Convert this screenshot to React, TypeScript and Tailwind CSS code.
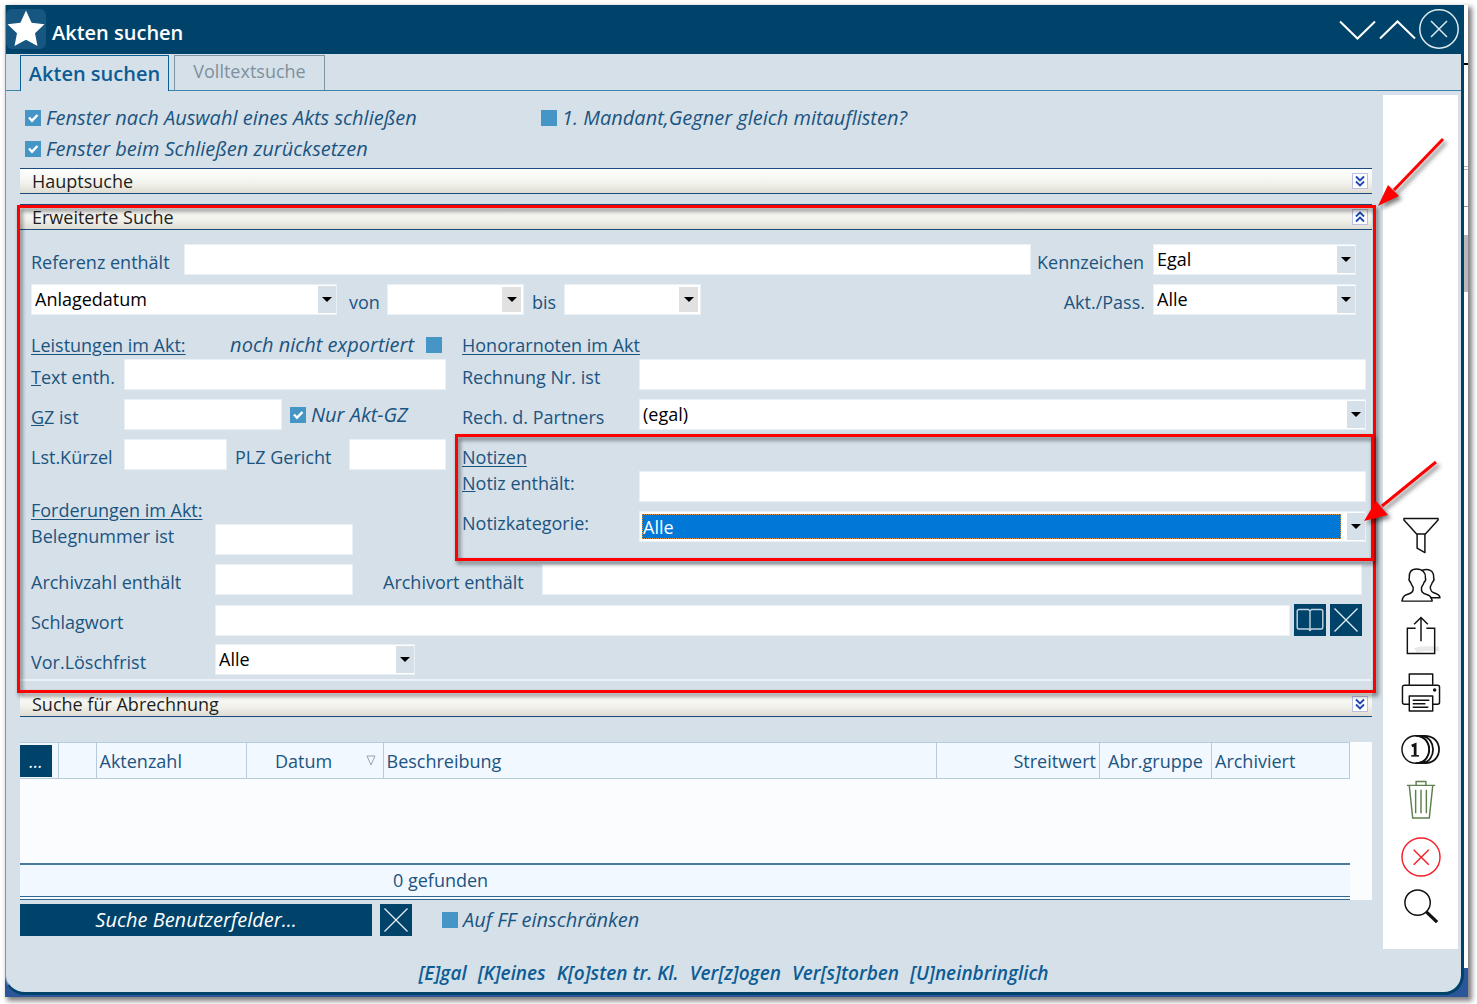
import { useId, type ReactNode } from "react";

/* ---------- form controls ---------- */

function Caret() {
  return (
    <svg viewBox="0 0 10 5" className="h-[5px] w-2.5" aria-hidden>
      <path d="M0 0h10L5 5z" fill="#000" />
    </svg>
  );
}

function TextField({ id, label, className = "" }: { id?: string; label?: string; className?: string }) {
  return (
    <input
      id={id}
      type="text"
      aria-label={label}
      className={`h-[31px] min-w-0 border border-[#e9f0f6] bg-white px-1 text-black outline-none ${className}`}
    />
  );
}

interface SelectFieldProps {
  id: string;
  options: string[];
  className?: string;
  focused?: boolean;
}

function SelectField({ id, options, className = "", focused = false }: SelectFieldProps) {
  return (
    <div className={`flex h-[31px] min-w-0 items-center border border-[#e9f0f6] bg-white ${className}`}>
      <select
        id={id}
        className={
          focused
            ? "mr-1.5 ml-0.5 h-[25px] min-w-0 flex-1 appearance-none border border-dotted border-[#e08a3c] bg-[#0078d7] text-white outline-none"
            : "h-full min-w-0 flex-1 appearance-none bg-white pb-0.5 pl-[3px] text-black outline-none"
        }
      >
        {options.map((o) => (
          <option key={o}>{o}</option>
        ))}
      </select>
      <span className="pointer-events-none flex h-[27px] w-[18px] items-center justify-center bg-[#d5e0e9]">
        <Caret />
      </span>
    </div>
  );
}

function DateField({ id, className = "" }: { id: string; className?: string }) {
  return (
    <div className={`flex h-[31px] items-center border border-[#e9f0f6] bg-white ${className}`}>
      <input id={id} type="text" className="h-full min-w-0 flex-1 px-1 text-black outline-none" />
      <button
        type="button"
        aria-label="Kalender"
        className="mr-0.5 flex h-[25px] w-[19px] items-center justify-center bg-[#e1e1e1]"
      >
        <Caret />
      </button>
    </div>
  );
}

interface CheckFieldProps {
  label: string;
  checked?: boolean;
  boxAfter?: boolean;
  className?: string;
}

function CheckField({ label, checked = false, boxAfter = false, className = "" }: CheckFieldProps) {
  return (
    <label
      className={`flex items-center text-[20px] leading-6 whitespace-nowrap italic ${boxAfter ? "flex-row-reverse gap-3" : "gap-[5px]"} ${className}`}
    >
      <span className="relative size-4 shrink-0">
        <input type="checkbox" defaultChecked={checked} className="peer block size-4 appearance-none bg-[#4596c6]" />
        <svg
          viewBox="0 0 16 16"
          className="pointer-events-none absolute inset-0 hidden size-4 peer-checked:block"
          fill="none"
          stroke="#fff"
          strokeWidth="2.4"
          aria-hidden
        >
          <path d="M4 7.5l3 3.2L12.5 5" />
        </svg>
      </span>
      {label}
    </label>
  );
}

interface LabelProps {
  htmlFor: string;
  flush?: boolean;
  className?: string;
  children: ReactNode;
}

function Label({ htmlFor, flush = false, className = "", children }: LabelProps) {
  return (
    <label htmlFor={htmlFor} className={`shrink-0 ${flush ? "self-start" : "pt-1"} ${className}`}>
      {children}
    </label>
  );
}

function Heading({ children, className = "" }: { children: ReactNode; className?: string }) {
  return <h3 className={`flex h-7 items-center underline underline-offset-2 ${className}`}>{children}</h3>;
}

function SectionBar({ title, open = false }: { title: string; open?: boolean }) {
  return (
    <div className="flex h-[26px] items-center justify-between border-y border-y-[#1a4b7c] bg-linear-to-b from-white via-[#f2f2ec] via-60% to-[#dedcd2] pr-1 pl-3 text-[#1e1e1e]">
      <h2>{title}</h2>
      <button
        type="button"
        aria-expanded={open}
        aria-label={title}
        className="flex size-4 items-center justify-center border border-[#b9c0e4] bg-white"
      >
        <svg viewBox="0 0 10 12" className="h-3 w-2.5" fill="none" stroke="#1c46b4" strokeWidth="1.8" aria-hidden>
          {open ? <path d="M1 5.5l4-4 4 4M1 10.5l4-4 4 4" /> : <path d="M1 1.5l4 4 4-4M1 6.5l4 4 4-4" />}
        </svg>
      </button>
    </div>
  );
}

function CrossButton({ label }: { label: string }) {
  return (
    <button type="button" aria-label={label} className="size-8 shrink-0 bg-[#00436a]">
      <svg viewBox="0 0 32 32" className="size-8" stroke="#e6eef4" strokeWidth="1.3" aria-hidden>
        <path d="M4.5 4.5l23 23M27.5 4.5l-23 23" />
      </svg>
    </button>
  );
}

/* ---------- red markers ---------- */

function MarkFrame({ className }: { className: string }) {
  return (
    <div
      aria-hidden
      className={`pointer-events-none absolute border-3 border-[#f00] drop-shadow-[2px_3px_2px_rgba(0,0,0,0.55)] ${className}`}
    />
  );
}

/* ---------- tool bar icons ---------- */

const tools: { name: string; gap: string; icon: ReactNode }[] = [
  {
    name: "Filter",
    gap: "mt-0",
    icon: (
      <g strokeLinejoin="round">
        <path d="M3 2.5h35v1.5L25 18.500h-9L3 4z" />
        <path d="M16.500 18.500v14.500l8 4.500V18.500" />
      </g>
    ),
  },
  {
    name: "Personen",
    gap: "mt-2.5",
    icon: (
      <g strokeLinejoin="round">
        <path d="M16 3c-6 0-8 4-7.500 9-1 2 .5 4 1.500 5 .5 2 2 3.500 2.500 5 .5 5-2 6-7 7.500-3 1-4 3-4.500 6.500h31c-.5-3.500-2-5.500-5-6.500-5-1.500-6.500-3-6-7.500.5-1.500 2-3 2.500-5 1-1 2.500-3 1.500-5 .5-5-3-9-9-9z" />
        <path d="M21.500 4.500c6-2.500 12.500 0 12 7.500 1 2-.5 4-1.500 5-.5 2-1.500 3-2 4.500 0 4.500 2 5.500 5 6.500 3 1 4.500 2 5 4.500h-10" />
      </g>
    ),
  },
  {
    name: "Exportieren",
    gap: "mt-2.5",
    icon: (
      <>
        <path d="M15 35.500c6-4 16-1 24-2" stroke="#e9e9e9" strokeWidth="5" />
        <path d="M15 12.500H6.500v26h28v-26H26M20.500 26V2M13.500 8.500l7-7 7 7" />
      </>
    ),
  },
  {
    name: "Drucken",
    gap: "mt-[17px]",
    icon: (
      <g strokeLinejoin="round">
        <path d="M8.500 12V1h24v11" />
        <path d="M8.500 32H3.500a2 2 0 0 1-2-2V14.500a2 2 0 0 1 2-2h34a2 2 0 0 1 2 2V30a2 2 0 0 1-2 2h-5" />
        <path d="M8.500 23.500h24V39h-24zM12 28h17M12 31.500h13M12 35h16" />
        <circle cx="34.500" cy="17.500" r="1" fill="#111" />
      </g>
    ),
  },
  {
    name: "Honorar",
    gap: "mt-[17px]",
    icon: (
      <>
        <circle cx="15" cy="20" r="14" />
        <path d="M11 16.500l3.500-1.500v11" strokeWidth="2.800" />
        <path d="M10.500 26.500h8" strokeWidth="1.600" />
        <path d="M18 6.300c14.500 2 14.500 25.400 0 27.400M22 6.300c14.500 2 14.500 25.400 0 27.400M25.500 6c18 1 18 27 0 28M15 6h11M15 34h11" strokeWidth="1.800" />
      </>
    ),
  },
  {
    name: "Papierkorb",
    gap: "mt-2.5",
    icon: (
      <g stroke="#5f8050">
        <path d="M6 5.500h29M15.500 5V1.500h10V5M8.500 6L12 39h17l3.500-33M15 10v24M20.500 10v24M26 10v24" />
      </g>
    ),
  },
  {
    name: "Abbrechen",
    gap: "mt-[17px]",
    icon: (
      <g stroke="#f5202a">
        <circle cx="20.500" cy="20.500" r="19.500" />
        <path d="M13 13l15.500 15.500M28.500 13L13 28.500" />
      </g>
    ),
  },
  {
    name: "Suchen",
    gap: "mt-2.5",
    icon: (
      <>
        <circle cx="17" cy="16" r="13" />
        <path d="M26 25.500l11 10.500" strokeWidth="3.400" />
      </>
    ),
  },
];

function ToolBar() {
  return (
    <aside className="flex w-[75px] shrink-0 flex-col items-center justify-end bg-white pb-[22px]">
      {tools.map((t) => (
        <button key={t.name} type="button" aria-label={t.name} className={`size-10 ${t.gap}`}>
          <svg viewBox="0 0 41 41" className="size-10" fill="none" stroke="#111" strokeWidth="1.5" aria-hidden>
            {t.icon}
          </svg>
        </button>
      ))}
    </aside>
  );
}

/* ---------- window parts ---------- */

function TitleBar() {
  return (
    <header className="flex h-12 items-center bg-[#00436a] pr-0.5 text-white">
      <span className="flex size-10 items-center justify-center rounded-md bg-[#165680]">
        <svg viewBox="0 0 40 40" className="size-10" fill="#fff" aria-hidden>
          <path d="M20 1.500l5.600 12.200 12.900 1.500-9.500 9L31.500 37 20 30.800 8.500 37 11 24.200l-9.500-9 12.900-1.500z" />
        </svg>
      </span>
      <h1 className="flex-1 pt-2 pl-1.5 text-[20px] font-semibold">Akten suchen</h1>
      <div className="flex gap-[3px]">
        <button type="button" aria-label="Verkleinern">
          <svg viewBox="0 0 37 40" className="h-10 w-[37px]" fill="none" stroke="#fff" strokeWidth="2" aria-hidden>
            <path d="M1 12.500l17.500 17L36 12.500" />
          </svg>
        </button>
        <button type="button" aria-label="Vergrößern">
          <svg viewBox="0 0 37 40" className="h-10 w-[37px]" fill="none" stroke="#fff" strokeWidth="2" aria-hidden>
            <path d="M1 29.500l17.500-17L36 29.500" />
          </svg>
        </button>
        <button type="button" aria-label="Schließen">
          <svg viewBox="0 0 40 40" className="size-10" fill="none" stroke="#dfe9f0" strokeWidth="1.5" aria-hidden>
            <circle cx="20" cy="20" r="19.200" />
            <path d="M12 12l16 16M28 12L12 28" />
          </svg>
        </button>
      </div>
    </header>
  );
}

function Tabs() {
  return (
    <div className="border-t border-[#00436a]">
      <div role="tablist" className="flex h-[37px] items-stretch border-b border-[#3f82ab] pt-px pl-3.5">
        <button
          type="button"
          role="tab"
          aria-selected
          className="-mb-px w-[149px] border border-b-0 border-[#0a5f97] bg-[#d5e0e9] text-[20px] font-semibold text-[#0d5c93]"
        >
          Akten suchen
        </button>
        <button
          type="button"
          role="tab"
          aria-selected={false}
          className="ml-[5px] w-[151px] border border-b-0 border-[#7f95a3] pb-1 text-[#7f909c]"
        >
          Volltextsuche
        </button>
      </div>
    </div>
  );
}

function ExtendedSearch() {
  const id = useId();
  return (
    <section className="relative mt-2.5">
      <SectionBar title="Erweiterte Suche" open />
      <div className="border-r border-b-2 border-[#ecf2f7] pt-3.5 pr-[5px] pb-1 pl-[11px]">
        <div className="mr-2.5 flex items-center">
          <Label htmlFor={`${id}ref`} className="w-[153px]">Referenz enthält</Label>
          <TextField id={`${id}ref`} className="flex-1" />
          <Label htmlFor={`${id}kz`} className="w-[122px] pl-1.5">Kennzeichen</Label>
          <SelectField id={`${id}kz`} options={["Egal"]} className="w-[203px]" />
        </div>

        <div className="mt-[9px] mr-2.5 flex items-center">
          <SelectField id={`${id}datum`} options={["Anlagedatum"]} className="w-[306px]" />
          <Label htmlFor={`${id}von`} className="w-[50px] pl-3">von</Label>
          <DateField id={`${id}von`} className="w-[137px]" />
          <Label htmlFor={`${id}bis`} className="w-10 pl-2">bis</Label>
          <DateField id={`${id}bis`} className="w-[137px]" />
          <Label htmlFor={`${id}pass`} className="ml-auto pr-2">Akt./Pass.</Label>
          <SelectField id={`${id}pass`} options={["Alle"]} className="w-[203px]" />
        </div>

        <div className="mt-4 flex gap-4">
          <div className="w-[415px] shrink-0">
            <div className="flex items-center justify-between">
              <Heading>Leistungen im Akt:</Heading>
              <CheckField label="noch nicht exportiert" boxAfter className="pr-1" />
            </div>
            <div className="flex items-center">
              <Label htmlFor={`${id}text`} className="w-[93px]"><u>T</u>ext enth.</Label>
              <TextField id={`${id}text`} className="flex-1" />
            </div>
            <div className="mt-[9px] flex items-center">
              <Label htmlFor={`${id}gz`} className="w-[93px]"><u>G</u>Z ist</Label>
              <TextField id={`${id}gz`} className="w-[158px]" />
              <CheckField label="Nur Akt-GZ" checked className="pl-2" />
            </div>
            <div className="mt-[9px] flex items-center">
              <Label htmlFor={`${id}lst`} className="w-[93px]">Lst.Kürzel</Label>
              <TextField id={`${id}lst`} className="w-[103px]" />
              <Label htmlFor={`${id}plz`} className="w-[122px] pl-2">PLZ Gericht</Label>
              <TextField id={`${id}plz`} className="flex-1" />
            </div>
            <Heading className="mt-[26px]">Forderungen im Akt:</Heading>
            <div className="flex">
              <Label htmlFor={`${id}beleg`} flush className="w-[184px]">Belegnummer ist</Label>
              <TextField id={`${id}beleg`} className="w-[138px]" />
            </div>
          </div>

          <div className="min-w-0 flex-1">
            <Heading>Honorarnoten im Akt</Heading>
            <div className="flex items-center">
              <Label htmlFor={`${id}rnr`} className="w-[177px]">Rechnung Nr. ist</Label>
              <TextField id={`${id}rnr`} className="flex-1" />
            </div>
            <div className="mt-[9px] flex items-center">
              <Label htmlFor={`${id}partner`} className="w-[177px]">Rech. d. Partners</Label>
              <SelectField id={`${id}partner`} options={["(egal)"]} className="flex-1" />
            </div>
            <div className="relative mt-[13px]">
              <MarkFrame className="-top-[9px] -right-2 -bottom-[19px] -left-[7px] z-10" />
              <svg
                viewBox="0 0 84 72"
                className="pointer-events-none absolute top-4 -right-20 z-20 h-[72px] w-[84px] drop-shadow-[3px_3px_2px_rgba(0,0,0,0.5)]"
                aria-hidden
              >
                <path d="M74 3L20 47" stroke="#f00" strokeWidth="3" />
                <path d="M2 62L14 42 26 56z" fill="#f00" />
              </svg>
              <Heading>Notizen</Heading>
              <div className="flex items-center">
                <Label htmlFor={`${id}notiz`} flush className="w-[177px]"><u>N</u>otiz enthält:</Label>
                <TextField id={`${id}notiz`} className="flex-1" />
              </div>
              <div className="mt-[9px] flex items-center">
                <Label htmlFor={`${id}kat`} flush className="w-[177px]">Notizkategorie:</Label>
                <SelectField id={`${id}kat`} options={["Alle"]} className="flex-1" focused />
              </div>
            </div>
          </div>
        </div>

        <div className="mt-[9px] mr-1 flex items-center">
          <Label htmlFor={`${id}az`} className="w-[184px]">Archivzahl enthält</Label>
          <TextField id={`${id}az`} className="w-[138px]" />
          <Label htmlFor={`${id}ao`} className="w-[189px] pl-[30px]">Archivort enthält</Label>
          <TextField id={`${id}ao`} className="flex-1" />
        </div>

        <div className="mt-[9px] mr-1 flex items-center">
          <Label htmlFor={`${id}sw`} className="w-[184px]">Schlagwort</Label>
          <TextField id={`${id}sw`} className="flex-1" />
          <button type="button" aria-label="Schlagwort auswählen" className="mx-1 size-8 bg-[#00436a]">
            <svg viewBox="0 0 32 32" className="size-8" fill="none" stroke="#c3d5e2" strokeWidth="1.4" aria-hidden>
              <path d="M5 5.500h9.500L16 7l1.500-1.500H27a1.800 1.800 0 0 1 1.800 1.800v15.900A1.800 1.800 0 0 1 27 25h-9.500L16 26.500 14.500 25H5a1.800 1.800 0 0 1-1.800-1.800V7.300A1.800 1.800 0 0 1 5 5.500zM16 7v19.500" />
            </svg>
          </button>
          <CrossButton label="Schlagwort löschen" />
        </div>

        <div className="mt-2 flex items-center">
          <Label htmlFor={`${id}frist`} className="w-[184px]">Vor.Löschfrist</Label>
          <SelectField id={`${id}frist`} options={["Alle"]} className="w-[200px]" />
        </div>
      </div>

      <MarkFrame className="top-px -right-1 -bottom-3 -left-[3px]" />
      <svg
        viewBox="0 0 76 76"
        className="pointer-events-none absolute -top-[70px] -right-20 size-[76px] drop-shadow-[3px_3px_2px_rgba(0,0,0,0.5)]"
        aria-hidden
      >
        <path d="M67 5L18 56" stroke="#f00" strokeWidth="3" />
        <path d="M2 72L12 51 23 62z" fill="#f00" />
      </svg>
    </section>
  );
}

const th = "border border-[#b7ccdb] px-[3px] font-normal";

function ResultTable() {
  return (
    <div className="mt-[25px] bg-[#fbfcfe] pr-[22px]">
      <table className="w-full table-fixed border-collapse">
        <thead>
          <tr className="h-9 bg-[#f1f8ff] text-left">
            <th className="w-[38px] border border-l-0 border-[#b7ccdb] p-0 font-normal">
              <button type="button" className="block size-8 bg-[#00436a] text-white italic">...</button>
            </th>
            <th className={`${th} w-[38px]`} aria-label="Status" />
            <th className={`${th} w-[150px]`}>Aktenzahl</th>
            <th className={`${th} w-[137px]`}>
              <span className="flex items-center pr-1">
                <span className="flex-1 pr-2 text-center">Datum</span>
                <svg viewBox="0 0 10 11" className="h-[11px] w-2.5" fill="none" stroke="#9aa3aa" aria-hidden>
                  <path d="M1 1h8L5 10z" />
                </svg>
              </span>
            </th>
            <th className={th}>Beschreibung</th>
            <th className={`${th} w-[163px] text-right`}>Streitwert</th>
            <th className={`${th} w-[112px] text-center`}>Abr.gruppe</th>
            <th className={`${th} w-[138px]`}>Archiviert</th>
          </tr>
        </thead>
        <tbody>
          <tr className="h-[85px]">
            <td colSpan={8} />
          </tr>
        </tbody>
        <tfoot>
          <tr className="h-[34px] border-t-2 border-b-4 border-t-[#4a7b9d] border-b-[#2e6890] bg-[#f1f8ff] [border-bottom-style:double]">
            <td colSpan={4} className="p-0" />
            <td colSpan={4} className="py-0 pl-2.5">0 gefunden</td>
          </tr>
        </tfoot>
      </table>
    </div>
  );
}

// Slice of the application behind the dialog, visible along the right edge
function BackdropEdge() {
  return (
    <div aria-hidden className="flex w-1 shrink-0 flex-col">
      <div className="mt-[58px] h-0.5 bg-black" />
      <div className="mt-[101px] h-1 border-y border-[#b5b5b5]" />
      <div className="mt-9 h-px bg-[#9a9a9a]" />
      <div className="mt-7 h-[57px] bg-[#b9b9b9]" />
    </div>
  );
}

export default function App() {
  return (
    <div className="bg-white pt-[5px] pr-[9px] pb-[9px] pl-[5px] font-['Open_Sans','Noto_Sans',sans-serif] text-[18px] leading-6 text-[#1c5480]">
      <div className="flex bg-[linear-gradient(to_top,#2b579a_29px,#ffffff_29px)] pb-0.5 shadow-[3px_3px_5px_1px_rgba(0,0,0,0.5)]">
        <main className="min-w-0 flex-1 overflow-hidden rounded-b-[20px] border-r-3 border-b-3 border-l border-[#00436a] border-l-[#6f9cba] bg-[#d5e0e9]">
          <TitleBar />
          <Tabs />
          <div className="flex gap-[11px] pt-1 pr-[3px] pl-3.5">
            <div className="min-w-0 flex-1 pb-[13px]">
              <div className="grid grid-cols-[516px_1fr] pt-[7px] pb-1 pl-[5px]">
                <CheckField label="Fenster nach Auswahl eines Akts schließen" checked className="h-[31px]" />
                <CheckField label="1. Mandant,Gegner gleich mitauflisten?" className="h-[31px]" />
                <CheckField label="Fenster beim Schließen zurücksetzen" checked className="h-[31px]" />
              </div>
              <SectionBar title="Hauptsuche" />
              <ExtendedSearch />
              <div className="mt-2.5">
                <SectionBar title="Suche für Abrechnung" />
              </div>
              <ResultTable />
              <div className="mt-1 flex items-center gap-2">
                <button type="button" className="h-8 w-[352px] bg-[#00436a] text-[20px] text-white italic">
                  Suche Benutzerfelder...
                </button>
                <CrossButton label="Benutzerfelder löschen" />
                <CheckField label="Auf FF einschränken" className="pl-[22px]" />
              </div>
            </div>
            <ToolBar />
          </div>
          <footer className="flex h-[43px] items-center justify-center gap-[11px] pt-1.5 text-[19px] font-semibold text-[#0d5c93] italic">
            <span>[E]gal</span>
            <span>[K]eines</span>
            <span>K[o]sten tr. Kl.</span>
            <span>Ver[z]ogen</span>
            <span>Ver[s]torben</span>
            <span>[U]neinbringlich</span>
          </footer>
        </main>
        <BackdropEdge />
      </div>
    </div>
  );
}
